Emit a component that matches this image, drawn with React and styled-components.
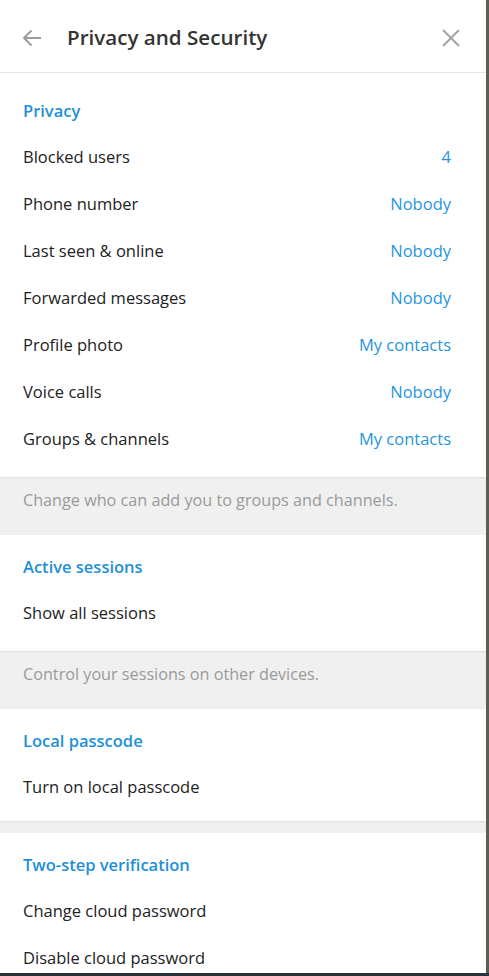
import React from 'react';
import styled, { createGlobalStyle } from 'styled-components';

const GlobalStyle = createGlobalStyle`
  html, body {
    margin: 0;
    padding: 0;
    background: #2c323a;
  }
  body {
    font-family: "Open Sans", "Liberation Sans", sans-serif;
  }
`;

const Page = styled.div`
  display: flex;
  width: 489px;
  height: 976px;
  background: #2c323a;
  overflow: hidden;
`;

const Panel = styled.div`
  display: flex;
  flex-direction: column;
  width: 486px;
  height: 973px;
  background: #fff;
  overflow: hidden;
`;

const Backdrop = styled.div`
  width: 3px;
  height: 973px;
  background: #5c5e52;
`;

const Header = styled.div`
  display: flex;
  align-items: center;
  box-sizing: border-box;
  height: 73px;
  flex-shrink: 0;
  border-bottom: 1px solid #e6e6e6;
  padding: 2px 24px 0 21px;
`;

const IconButton = styled.div`
  display: flex;
  align-items: center;
  justify-content: center;
  width: 22px;
  height: 22px;
  margin-top: ${p => p.nudge || 0}px;
`;

const Title = styled.div`
  flex: 1;
  margin-left: 24px;
  font-size: 20.6px;
  font-weight: 600;
  color: #333;
  line-height: 26px;
`;

const Content = styled.div`
  padding-top: 6px;
`;

const Section = styled.div`
  background: #fff;
  padding: 9px 0 ${p => p.bottom}px;
`;

const SectionTitle = styled.div`
  box-sizing: border-box;
  height: 46px;
  display: flex;
  align-items: center;
  padding: 0 23px 2px;
  font-size: 16.5px;
  font-weight: 600;
  color: #1f90d8;
`;

const Row = styled.div`
  box-sizing: border-box;
  height: 47px;
  display: flex;
  align-items: center;
  justify-content: space-between;
  padding: 0 35px 2px 23px;
  font-size: 16.5px;
  color: #222;
`;

const Value = styled.span`
  color: #1f95de;
`;

const Note = styled.div`
  background: #f0f0f0;
  box-shadow: inset 0 2px 2px -1px rgba(0, 0, 0, 0.08);
  height: ${p => p.h}px;
  box-sizing: border-box;
  padding: 12px 23px 0;
  font-size: 16.2px;
  line-height: 22px;
  color: #9a9a9a;
`;

const privacyRows = [
  ['Blocked users', '4'],
  ['Phone number', 'Nobody'],
  ['Last seen & online', 'Nobody'],
  ['Forwarded messages', 'Nobody'],
  ['Profile photo', 'My contacts'],
  ['Voice calls', 'Nobody'],
  ['Groups & channels', 'My contacts'],
];

export default function App() {
  return (
    <Page>
      <GlobalStyle />
      <Panel>
        <Header>
          <IconButton nudge={2}>
            <svg width="20" height="18" viewBox="0 0 20 18">
              <path d="M19 9H2M9.5 1.5L2 9l7.5 7.5" fill="none" stroke="#9c9c9c" strokeWidth="2" />
            </svg>
          </IconButton>
          <Title>Privacy and Security</Title>
          <IconButton nudge={2}>
            <svg width="18" height="18" viewBox="0 0 18 18">
              <path d="M1 1l16 16M17 1L1 17" fill="none" stroke="#a3a3a3" strokeWidth="2" />
            </svg>
          </IconButton>
        </Header>
        <Content>
          <Section bottom={14}>
            <SectionTitle>Privacy</SectionTitle>
            {privacyRows.map(([label, value]) => (
              <Row key={label}>
                <span>{label}</span>
                <Value>{value}</Value>
              </Row>
            ))}
          </Section>
          <Note h={58}>Change who can add you to groups and channels.</Note>
          <Section bottom={14}>
            <SectionTitle>Active sessions</SectionTitle>
            <Row>Show all sessions</Row>
          </Section>
          <Note h={58}>Control your sessions on other devices.</Note>
          <Section bottom={10}>
            <SectionTitle>Local passcode</SectionTitle>
            <Row>Turn on local passcode</Row>
          </Section>
          <Note h={12} />
          <Section bottom={14}>
            <SectionTitle>Two-step verification</SectionTitle>
            <Row>Change cloud password</Row>
            <Row>Disable cloud password</Row>
          </Section>
        </Content>
      </Panel>
      <Backdrop />
    </Page>
  );
}
